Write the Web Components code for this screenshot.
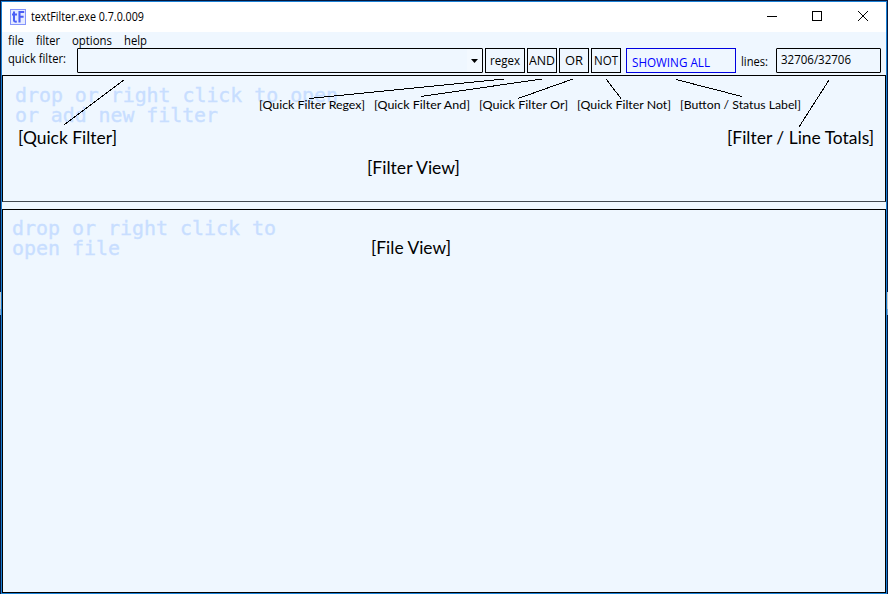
<!DOCTYPE html>
<html lang="en">
<head>
<meta charset="utf-8">
<title>textFilter.exe 0.7.0.009</title>
<style>
html,body{margin:0;padding:0;width:888px;height:594px;overflow:hidden;background:#04163c}
</style>
</head>
<body>
<tf-window></tf-window>
<script>
const define = (name, html, ready) => {
  const tpl = document.createElement('template');
  tpl.innerHTML = html;
  customElements.define(name, class extends HTMLElement {
    connectedCallback() {
      if (this.shadowRoot) return;
      this.attachShadow({mode: 'open'}).append(tpl.content.cloneNode(true));
      if (ready) ready(this, this.shadowRoot);
    }
  });
};

/* Text condensed or widened to a given advance width */
define('fit-text', `<style>
:host{display:block;white-space:pre;flex:none}
span{display:inline-block;transform-origin:0 0}
</style><span></span>`, (host, root) => {
  const s = root.querySelector('span');
  s.textContent = host.getAttribute('text');
  const w = +host.getAttribute('w');
  host.style.width = w + 'px';
  s.style.transform = 'scaleX(' + w / s.getBoundingClientRect().width + ')';
});

define('app-icon', `<style>:host{display:block;width:16px;height:16px}svg{display:block}</style>
<svg width="16" height="16" viewBox="0 0 16 16"><rect x=".5" y=".5" width="15" height="15" fill="#e6ebff" stroke="#8494fb"/>
<path d="M4 2.5V11.2Q4 13 6.8 12.6M2 5.5H7" fill="none" stroke="#4a5df5" stroke-width="2"/>
<path d="M9.5 13.5V3H14.2M9.5 7.8H13.6" fill="none" stroke="#4a5df5" stroke-width="2.1"/></svg>`);

define('title-bar', `<style>
:host{display:flex;height:30px;background:#fff;align-items:center;padding-left:8px;box-sizing:border-box;font:12px/16px "Open Sans",sans-serif;color:#000}
fit-text{margin-left:5px}
svg{margin-left:auto;flex:none;display:block}
</style><app-icon></app-icon><fit-text text="textFilter.exe 0.7.0.009" w="113"></fit-text>
<svg width="138" height="30" viewBox="748 2 138 30" fill="none" stroke="#000"><path d="M767 16.5h10"/><rect x="812.5" y="11.5" width="9" height="9"/><path d="M858 11l10 10M868 11l-10 10"/></svg>`);

define('menu-bar', `<style>
:host{display:flex;gap:12px;padding:1px 0 0 6px;height:16px;box-sizing:border-box;font:12px/16px "Open Sans",sans-serif;color:#000}
</style><fit-text text="file" w="16"></fit-text><fit-text text="filter" w="24"></fit-text><fit-text text="options" w="40"></fit-text><fit-text text="help" w="23"></fit-text>`);

define('tool-button', `<style>
:host{display:flex;flex:none;box-sizing:border-box;height:25px;border:1px solid #000;justify-content:center;padding-top:4px;line-height:16px}
</style><slot></slot>`);

define('combo-box', `<style>
:host{display:flex;flex:none;box-sizing:border-box;width:406px;height:25px;border:1px solid #000;border-radius:1px;justify-content:flex-end}
i{width:15px;background:#f3f9ff;display:flex}
svg{display:block;margin:10px 0 0 4px}
</style><i><svg width="7" height="4"><path d="M0 0h7L3.5 4z"/></svg></i>`);

define('tool-bar', `<style>
:host{display:flex;height:27px;font:12px/16px "Open Sans",sans-serif;color:#000;padding-left:6px;box-sizing:border-box}
.q{margin:3px 11px 0 0}
.rx{width:40px;margin-left:2px}.b{width:30px;margin-left:2px}
.st{width:110px;margin-left:5px;border-color:#0000e0;color:#00f;justify-content:flex-start;padding:6px 0 0 5px}
.l{margin:6px 8px 0 5px}
.t{width:105px;border-radius:1px;justify-content:flex-start;padding:3px 0 0 4px}
</style><fit-text class="q" text="quick filter:" w="58"></fit-text><combo-box></combo-box>
<tool-button class="rx"><fit-text text="regex" w="30"></fit-text></tool-button>
<tool-button class="b"><fit-text text="AND" w="26"></fit-text></tool-button>
<tool-button class="b"><fit-text text="OR" w="18"></fit-text></tool-button>
<tool-button class="b"><fit-text text="NOT" w="24"></fit-text></tool-button>
<tool-button class="st"><fit-text text="SHOWING ALL" w="78"></fit-text></tool-button>
<fit-text class="l" text="lines:" w="27"></fit-text>
<tool-button class="t"><fit-text text="32706/32706" w="70"></fit-text></tool-button>`);

define('view-pane', `<style>
:host{display:block;box-sizing:border-box;border:1px solid #000;font:20px/20px "DejaVu Sans Mono",monospace;color:#c8deff;-webkit-text-stroke:.35px #c8deff}
</style><slot></slot>`);

/* Callouts and leader lines drawn over the window */
define('callout-layer', `<style>
:host{position:absolute;inset:-1px;color:#000;font-family:Lato,sans-serif}
svg{position:absolute;inset:0}
fit-text{position:absolute}
.s{font-size:12px;line-height:16px;top:97px}
.m{font-size:18px;line-height:22px}
</style>
<svg width="888" height="594" stroke="#000" fill="none" shape-rendering="crispEdges"><path d="M124 80L64 125M504 79L309 98.500M542 79L421 96.500M573 79L518 98.500M606 79L621 98.500M676 79.500L742 96.500M829 80L799 127"/></svg>
<fit-text class="s" style="left:259px" text="[Quick Filter Regex]" w="106"></fit-text>
<fit-text class="s" style="left:374px" text="[Quick Filter And]" w="96"></fit-text>
<fit-text class="s" style="left:479px" text="[Quick Filter Or]" w="89"></fit-text>
<fit-text class="s" style="left:577px" text="[Quick Filter Not]" w="94"></fit-text>
<fit-text class="s" style="left:680px" text="[Button / Status Label]" w="121"></fit-text>
<fit-text class="m" style="left:18px;top:126px" text="[Quick Filter]" w="99"></fit-text>
<fit-text class="m" style="left:727px;top:126px" text="[Filter / Line Totals]" w="147"></fit-text>
<fit-text class="m" style="left:367px;top:156px" text="[Filter View]" w="93"></fit-text>
<fit-text class="m" style="left:371px;top:236px" text="[File View]" w="80"></fit-text>`);

define('tf-window', `<style>
:host{display:flex;flex-direction:column;position:relative;width:888px;height:594px;box-sizing:border-box;border:1px solid transparent;border-bottom:0;
background:linear-gradient(#04163c 292px,#c4c8cc 292px,#c4c8cc 309px,#7fa4cc 309px,#7fa4cc 315px,#04163c 315px) border-box}
main{flex:1;display:flex;flex-direction:column;border:1px solid #1a7fd4;background:#eff7ff}
.f{height:127px;padding:9px 0 0 12px;border-bottom-color:#404850}
.v{flex:1;margin-top:7px;padding:8px 0 0 9px}
</style><main><title-bar></title-bar><menu-bar></menu-bar><tool-bar></tool-bar>
<view-pane class="f"><fit-text text="drop or right click to open" w="323"></fit-text><fit-text text="or add new filter" w="203"></fit-text></view-pane>
<view-pane class="v"><fit-text text="drop or right click to" w="264"></fit-text><fit-text text="open file" w="108"></fit-text></view-pane></main>
<callout-layer></callout-layer>`);
</script>
</body>
</html>
